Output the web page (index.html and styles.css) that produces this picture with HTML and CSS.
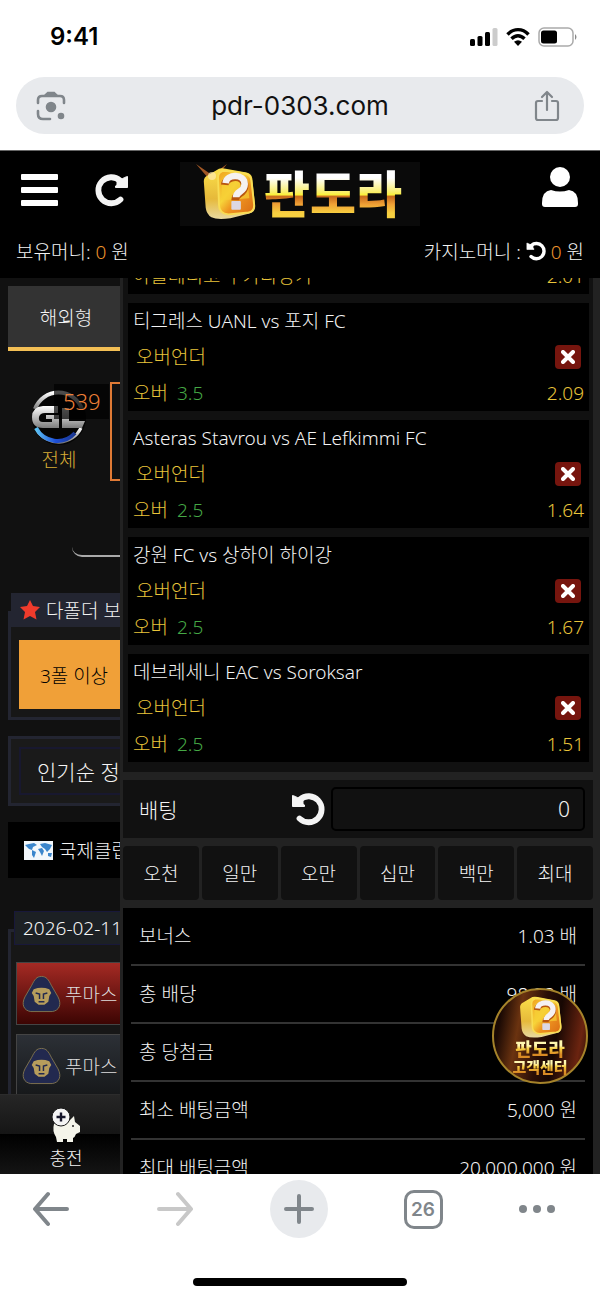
FILE: index.html
```html
<!DOCTYPE html>
<html lang="ko">
<head>
    <meta charset="UTF-8">
    <meta name="viewport" content="width=device-width, initial-scale=1.0">
    <title>판도라</title>
    <link rel="stylesheet" href="styles.css">
</head>
<body>
    <svg class="defs" width="0" height="0" aria-hidden="true">
        <defs>
            <linearGradient id="face" x1="0" y1="0" x2="1" y2="1">
                <stop offset="0" stop-color="#f0a020"/>
                <stop offset="0.4" stop-color="#f7d53a"/>
                <stop offset="0.6" stop-color="#ee9420"/>
                <stop offset="1" stop-color="#d96a14"/>
            </linearGradient>
            <linearGradient id="side" x1="0" y1="0" x2="0" y2="1">
                <stop offset="0" stop-color="#fbe04a"/>
                <stop offset="0.6" stop-color="#e6b93a"/>
                <stop offset="1" stop-color="#e9d9a0"/>
            </linearGradient>
            <linearGradient id="steel" x1="0" y1="0" x2="0" y2="1">
                <stop offset="0" stop-color="#ffffff"/>
                <stop offset="1" stop-color="#7d7d7d"/>
            </linearGradient>
            <linearGradient id="blue" x1="0" y1="0" x2="1" y2="0">
                <stop offset="0" stop-color="#5cc3f5"/>
                <stop offset="0.5" stop-color="#1e50d8"/>
                <stop offset="1" stop-color="#1a3690"/>
            </linearGradient>
            <symbol id="icon-undo" viewBox="0 0 34 34">
                <path d="M8.5 26.5A13 13 0 1 0 9 7.5" fill="none" stroke="currentColor" stroke-width="5.8" stroke-linecap="round"/>
                <path d="M1.5 3.5L4.5 4.5L7 6L12 7V12L13.5 13V14.5H1.5Z" fill="currentColor" stroke="currentColor" stroke-linejoin="round"/>
            </symbol>
            <symbol id="icon-cube" viewBox="0 0 60 60">
                <path d="M4 17Q4 13 8 11L20 4Q23 3 27 4L49 8Q54 9 55 14L58 42Q59 49 52 51L32 56Q18 58 12 55Q7 52 6 45Z" fill="url(#side)"/>
                <path d="M19 13Q19 6 27 6L47 9Q53 10 54 16L57 42Q57 49 51 50L30 52Q20 51 20 42Z" fill="url(#face)" stroke="#f9dd55" stroke-width="2"/>
                <path d="M23 17Q23 12 28 12L46 14Q49 15 50 19L52 35L23 37Z" fill="#f6cf35" opacity="0.7"/>
                <path d="M26 21C27 11 47 9 47 22C47 31 37 29 37 37" fill="none" stroke="#b85510" stroke-width="8"/>
                <path d="M27 19C28 9 47 9 47 20C47 29 38 27 38 34" fill="none" stroke="#f5f1f2" stroke-width="7"/>
                <rect x="33" y="38" width="10" height="9" rx="1" fill="#dcd8e4"/>
            </symbol>
            <symbol id="icon-puma" viewBox="0 0 40 38">
                <path d="M20 1C25 1 27 4 30 10L37 22C41 30 38 36 31 37H9C2 36 -1 30 3 22L10 10C13 4 15 1 20 1Z" fill="#22294f" stroke="#7c714f"/>
                <path d="M12 14Q20 11 28 14L30 18L28 21L27 27L23 30H17L13 27L12 21L10 18Z" fill="#b79d5c"/>
                <path d="M14 18L18 19V24M26 18L22 19V24M17 27H23" fill="none" stroke="#22294f" stroke-width="1.5"/>
            </symbol>
        </defs>
    </svg>

    <div class="status-bar">
        <span class="clock">9:41</span>
        <div class="status-icons">
            <svg width="28" height="20" viewBox="0 0 28 20">
                <rect x="0" y="12" width="5" height="7" rx="1.5"/>
                <rect x="7.500" y="9" width="5" height="10" rx="1.5"/>
                <rect x="15" y="5" width="5" height="14" rx="1.5"/>
                <rect x="22.500" y="1" width="5" height="18" rx="1.5" fill="#ccc"/>
            </svg>
            <svg width="24" height="20" viewBox="0 0 24 20">
                <path d="M1.500 7.500C7.500 1 16.500 1 22.500 7.500M5.500 11.800C9.500 7.800 14.500 7.800 18.500 11.800" fill="none" stroke="#000" stroke-width="3.4"/>
                <path d="M8 14.800Q12 11.500 16 14.800L12 19Z"/>
            </svg>
            <svg width="40" height="20" viewBox="0 0 40 20">
                <rect x="1" y="1" width="34" height="18" rx="5" fill="none" stroke="#aaa" stroke-width="1.5"/>
                <rect x="3" y="3.500" width="16" height="13" rx="2.500"/>
                <path d="M37 7Q40 10 37 13Z" fill="#888"/>
            </svg>
        </div>
    </div>

    <div class="address-bar">
        <button class="plain" aria-label="렌즈">
            <svg width="30" height="30" viewBox="0 0 30 30" fill="none" stroke="#80868b" stroke-width="2.600" stroke-linecap="round">
                <path d="M2 12V9Q2 5 6 5H24Q28 5 28 9V12M2 20V23Q2 28 7 28H14"/>
                <path d="M10 4L12 2H18L20 4Z" fill="#80868b"/>
                <circle cx="15" cy="16" r="4" fill="#80868b"/>
                <circle cx="25" cy="25" r="2" fill="#80868b"/>
            </svg>
        </button>
        <span class="url">pdr-0303.com</span>
        <button class="plain" aria-label="공유">
            <svg width="26" height="32" viewBox="0 0 26 32" fill="none" stroke="#80868b" stroke-width="2.200" stroke-linecap="round" stroke-linejoin="round">
                <path d="M8 11H4Q2 11 2 13V28Q2 30 4 30H22Q24 30 24 28V13Q24 11 22 11H18M13 20V2M8 7L13 2L18 7"/>
            </svg>
        </button>
    </div>

    <div class="webview">
        <header class="header">
            <div class="header-top">
                <div class="header-left">
                    <button class="plain" aria-label="메뉴">
                        <svg width="37" height="32" viewBox="0 0 37 32" fill="#fff">
                            <rect width="37" height="6" rx="1"/>
                            <rect y="13" width="37" height="6" rx="1"/>
                            <rect y="26" width="37" height="6" rx="1"/>
                        </svg>
                    </button>
                    <button class="plain flip" aria-label="새로고침">
                        <svg width="34" height="34"><use href="#icon-undo"/></svg>
                    </button>
                </div>
                <div class="logo">
                    <svg width="64" height="60" viewBox="0 0 64 60">
                        <path d="M0 0L16 11L31 0L20 14L12 30L13 15Z" fill="#c76a2c" opacity="0.8"/>
                        <use href="#icon-cube" x="4" y="1" width="57" height="57"/>
                        <circle cx="16" cy="12" r="4" fill="#ffe9b0" opacity="0.7"/>
                    </svg>
                    <span class="logo-text">판도라</span>
                </div>
                <button class="plain user" aria-label="내 정보">
                    <svg width="36" height="42" viewBox="0 0 36 42" fill="#fff">
                        <circle cx="18" cy="11" r="10"/>
                        <path d="M9 24Q18 27 27 24Q36 25 36 37V38Q36 41 33 41H3Q0 41 0 38V37Q0 25 9 24Z"/>
                    </svg>
                </button>
            </div>
            <div class="money">
                <span>보유머니: <b>0</b> 원</span>
                <span>카지노머니 : <svg width="20" height="20"><use href="#icon-undo"/></svg> <b>0</b> 원</span>
            </div>
        </header>

        <div class="content">
            <div class="page">
                <main class="games">
                    <button class="tab">해외형</button>
                    <div class="categories">
                        <div class="category">
                            <svg width="56" height="56" viewBox="0 0 56 56">
                                <circle cx="28" cy="28" r="27" fill="#050505"/>
                                <path d="M4 19A25 25 0 0 1 51 19" fill="none" stroke="url(#steel)" stroke-width="4"/>
                                <path d="M50 38A25 25 0 0 1 6 40" fill="none" stroke="url(#steel)" stroke-width="3"/>
                                <path d="M5 38A24 24 0 0 0 44 43" fill="none" stroke="url(#blue)" stroke-width="4"/>
                                <path d="M27 16H12Q1 17 1 27Q1 38 12 38H28V25H15V29H21V32H12Q7 32 8 27Q9 23 14 23H27Z" fill="url(#steel)"/>
                                <path d="M31 18H38V31H54L51 38H31Z" fill="url(#steel)"/>
                            </svg>
                            <span class="count">539</span>
                            <span class="category-name">전체</span>
                        </div>
                        <div class="category-box"></div>
                    </div>
                    <div class="filter"></div>

                    <section class="panel">
                        <h2 class="panel-title">
                            <svg width="20" height="20" viewBox="0 0 20 20"><path d="M10 0L13 6L20 7L15 12L16.500 19.500L10 16L3.500 19.500L5 12L0 7L7 6Z" fill="#ef3b2c"/></svg>
                            다폴더 보너스
                        </h2>
                        <div class="panel-body">
                            <button class="bonus">3폴 이상</button>
                        </div>
                    </section>

                    <div class="sort"><button class="sort-button">인기순 정렬</button></div>

                    <h2 class="league">
                        <svg width="29" height="19" viewBox="0 0 29 19">
                            <rect width="29" height="19" fill="#f2f7fb"/>
                            <path d="M1 4L5 3L10 2L13 4L9 6L8 9L5 8L3 6ZM8 9L12 11L10 17L8 14ZM16 3L21 2L28 4L26 8L23 11L21 8L18 6ZM14 8L18 7L20 10L18 15L16 11ZM24 12L28 12L27 16L24 15Z" fill="#3b86cc"/>
                        </svg>
                        국제클럽친선
                    </h2>

                    <section class="panel">
                        <h2 class="date">2026-02-11</h2>
                        <div class="panel-body matches">
                            <button class="team selected"><svg width="39" height="38"><use href="#icon-puma"/></svg>푸마스</button>
                            <button class="team"><svg width="39" height="38"><use href="#icon-puma"/></svg>푸마스</button>
                        </div>
                    </section>
                </main>
                <nav class="bottom-nav">
                    <a class="nav-link" href="#">
                        <svg width="30" height="36" viewBox="0 0 30 36">
                            <path d="M3 17Q8 13 18 14L23 9L24 15L29 19V25L25 27Q24 30 22 31V35H16V32H12V35H6L5 30Q1 24 3 17Z" fill="#f4f4ea"/>
                            <circle cx="22" cy="19" r="1" fill="#222"/>
                            <circle cx="10" cy="10" r="9" fill="#f4f4f4" stroke="#1a1a1a"/>
                            <path d="M10 5.500V14.500M5.500 10H14.500" stroke="#15152a" stroke-width="2.400"/>
                        </svg>
                        충전
                    </a>
                </nav>
            </div>

            <aside class="slip">
                <div class="bets">
                    <article class="bet">
                        <div class="bet-row"><span>아틀레티코 부카라망가</span><span>2.01</span></div>
                    </article>
                    <article class="bet">
                        <h3>티그레스 UANL vs 포지 FC</h3>
                        <div class="bet-row"><span class="type">오버언더</span><button class="remove" aria-label="삭제"><svg width="14" height="14" viewBox="0 0 14 14"><path d="M2 2L12 12M12 2L2 12"/></svg></button></div>
                        <div class="bet-row"><span>오버 <i>3.5</i></span><span>2.09</span></div>
                    </article>
                    <article class="bet">
                        <h3>Asteras Stavrou vs AE Lefkimmi FC</h3>
                        <div class="bet-row"><span class="type">오버언더</span><button class="remove" aria-label="삭제"><svg width="14" height="14" viewBox="0 0 14 14"><path d="M2 2L12 12M12 2L2 12"/></svg></button></div>
                        <div class="bet-row"><span>오버 <i>2.5</i></span><span>1.64</span></div>
                    </article>
                    <article class="bet">
                        <h3>강원 FC vs 상하이 하이강</h3>
                        <div class="bet-row"><span class="type">오버언더</span><button class="remove" aria-label="삭제"><svg width="14" height="14" viewBox="0 0 14 14"><path d="M2 2L12 12M12 2L2 12"/></svg></button></div>
                        <div class="bet-row"><span>오버 <i>2.5</i></span><span>1.67</span></div>
                    </article>
                    <article class="bet">
                        <h3>데브레세니 EAC vs Soroksar</h3>
                        <div class="bet-row"><span class="type">오버언더</span><button class="remove" aria-label="삭제"><svg width="14" height="14" viewBox="0 0 14 14"><path d="M2 2L12 12M12 2L2 12"/></svg></button></div>
                        <div class="bet-row"><span>오버 <i>2.5</i></span><span>1.51</span></div>
                    </article>
                </div>

                <div class="stake">
                    <label for="stake">배팅</label>
                    <button class="plain" aria-label="초기화"><svg width="34" height="34"><use href="#icon-undo"/></svg></button>
                    <input type="text" id="stake" value="0">
                </div>

                <div class="amounts">
                    <button>오천</button>
                    <button>일만</button>
                    <button>오만</button>
                    <button>십만</button>
                    <button>백만</button>
                    <button>최대</button>
                </div>

                <dl class="summary">
                    <div><dt>보너스</dt><dd>1.03 배</dd></div>
                    <div><dt>총 배당</dt><dd>98.28 배</dd></div>
                    <div><dt>총 당첨금</dt><dd></dd></div>
                    <div><dt>최소 배팅금액</dt><dd>5,000 원</dd></div>
                    <div><dt>최대 배팅금액</dt><dd>20,000,000 원</dd></div>
                </dl>
            </aside>
        </div>

        <a class="support" href="#">
            <svg width="46" height="46"><use href="#icon-cube"/></svg>
            <span class="support-name">판도라</span>
            <span class="support-text">고객센터</span>
        </a>
    </div>

    <div class="toolbar">
        <div class="toolbar-buttons">
            <button class="tool" aria-label="뒤로">
                <svg width="36" height="36" viewBox="0 0 36 36" stroke="#80868b"><path d="M34 18H3M15 3L2 18L15 33"/></svg>
            </button>
            <button class="tool" aria-label="앞으로">
                <svg width="36" height="36" viewBox="0 0 36 36" stroke="#c8c8c8"><path d="M2 18H33M21 3L34 18L21 33"/></svg>
            </button>
            <button class="tool" aria-label="새 탭">
                <svg width="58" height="58" viewBox="0 0 58 58" stroke="#80868b"><circle cx="29" cy="29" r="29" fill="#e8eaed" stroke="none"/><path d="M29 16V42M16 29H42"/></svg>
            </button>
            <button class="tool" aria-label="탭 목록"><span class="tab-count">26</span></button>
            <button class="tool more" aria-label="더보기">
                <svg width="36" height="8" viewBox="0 0 36 8" fill="#80868b"><circle cx="4" cy="4" r="4"/><circle cx="18" cy="4" r="4"/><circle cx="32" cy="4" r="4"/></svg>
            </button>
        </div>
        <div class="home-indicator"></div>
    </div>
</body>
</html>
```
FILE: styles.css
```css
* {
    box-sizing: border-box;
}

body {
    display: flex;
    flex-direction: column;
    height: 100vh;
    margin: 0;
    background: #fff;
    color: #f4f4f4;
    font-family: "Noto Sans", "Noto Sans CJK KR", sans-serif;
    font-size: 19px;
    font-weight: 300;
}

button, input {
    font: inherit;
    color: inherit;
}

button {
    padding: 0;
    border: none;
    cursor: pointer;
}

svg {
    flex: none;
    display: block;
}

h2, h3, dl, dd {
    margin: 0;
    font-size: 19px;
    font-weight: 300;
}

a {
    color: inherit;
    text-decoration: none;
}

.defs {
    position: absolute;
}

.plain {
    background: none;
}

/* browser top */
.status-bar {
    display: flex;
    flex: none;
    justify-content: space-between;
    align-items: center;
    height: 77px;
    padding: 0 22px 4px 50px;
    color: #000;
}

.clock {
    font-family: Inter, sans-serif;
    font-size: 24px;
    font-weight: 600;
}

.status-icons {
    display: flex;
    gap: 8px;
}

.address-bar {
    display: flex;
    flex: none;
    justify-content: space-between;
    align-items: center;
    height: 57px;
    margin: 0 16px 16px;
    padding: 0 24px 0 20px;
    border-radius: 29px;
    background: #e8eaed;
}

.url {
    color: #111;
    font-family: Inter, sans-serif;
    font-size: 26px;
    font-weight: 400;
}

/* site */
.webview {
    position: relative;
    display: flex;
    flex: 1;
    flex-direction: column;
    min-height: 0;
    overflow: hidden;
    border-top: 1px solid #666;
    background: #000;
}

.header {
    flex: none;
    padding: 11px 16px 0;
}

.header-top {
    display: grid;
    grid-template-columns: 1fr auto 1fr;
    align-items: center;
}

.header-left {
    display: flex;
    align-items: center;
    gap: 37px;
    padding: 0 0 8px 5px;
}

.flip {
    transform: scaleX(-1);
}

.logo {
    display: flex;
    align-items: center;
    gap: 4px;
    width: 240px;
    height: 64px;
    padding-left: 16px;
    background: #0a0a0a;
}

.logo-text {
    background: linear-gradient(#fff 25%, #f9ee6a 47%, #fbf23c 51%, #c86a1c 54%, #f0a035 66%, #f7d040 80%);
    background-clip: text;
    -webkit-background-clip: text;
    color: transparent;
    font-size: 50px;
    font-weight: 900;
    line-height: 64px;
}

.user {
    justify-self: end;
    margin: 0 6px 14px 0;
}

.money {
    display: flex;
    justify-content: space-between;
    height: 52px;
    line-height: 52px;
}

.money svg {
    display: inline-block;
    vertical-align: -2px;
    color: #fff;
}

.money b {
    color: #ee942c;
    font-weight: 300;
}

.content {
    display: flex;
    flex: 1;
    min-height: 0;
}

/* game list under the slip */
.page {
    display: flex;
    flex-direction: column;
    width: 20%;
    overflow: hidden;
    background: #111;
    white-space: nowrap;
}

.games {
    flex: 1;
    min-height: 0;
    overflow: hidden;
    padding: 8px 0 0 8px;
}

.tab {
    width: 116px;
    height: 65px;
    border-bottom: 4px solid #f3bf55;
    background: #333;
}

.categories {
    display: flex;
    padding-top: 31px;
}

.category {
    position: relative;
    display: flex;
    flex: none;
    flex-direction: column;
    align-items: center;
    width: 102px;
    height: 99px;
    padding-top: 8px;
    color: #d6ac35;
}

.count {
    position: absolute;
    top: 2px;
    right: 1px;
    width: 55px;
    height: 35px;
    padding-left: 9px;
    background: rgba(0, 0, 0, 0.7);
    color: #ee8038;
    font-size: 22px;
    line-height: 35px;
}

.category-name {
    line-height: 28px;
}

.category-box {
    flex: none;
    width: 102px;
    border: 2px solid #e07a35;
}

.filter {
    width: 200px;
    height: 60px;
    margin: 16px 0 36px 64px;
    border-bottom: 2px solid #aaa;
    border-radius: 10px;
}

.panel {
    width: 300px;
}

.panel-title, .date {
    position: relative;
    height: 34px;
}

.panel-title {
    display: flex;
    align-items: center;
    gap: 6px;
    margin-left: 3px;
    padding-left: 9px;
    background: #232531;
}

.panel-body {
    margin-top: -16px;
    padding: 26px 8px 8px;
    border: 3px solid #232531;
    background: #171717;
}

.bonus {
    width: 110px;
    height: 69px;
    background: #f0a038;
    color: #000;
}

.sort {
    width: 300px;
    height: 70px;
    margin-top: 16px;
    padding: 8px;
    border: 3px solid #232531;
    background: #1a1a1a;
}

.sort-button {
    width: 100%;
    height: 48px;
    padding-left: 16px;
    border: 2px solid #18182f;
    background: none;
    font-size: 21px;
    text-align: left;
}

.league {
    display: flex;
    align-items: center;
    gap: 6px;
    height: 56px;
    margin: 16px 0 33px;
    padding-left: 16px;
    background: #000;
}

.date {
    width: 130px;
    margin-left: 6px;
    padding-left: 8px;
    border: 1px solid #18183a;
    background: #1c2024;
    line-height: 32px;
}

.matches {
    padding: 30px 5px;
}

.team {
    display: flex;
    align-items: center;
    gap: 4px;
    width: 100%;
    height: 63px;
    margin-bottom: 9px;
    padding-left: 5px;
    border: 1px solid #444;
    background: linear-gradient(#2c3036, #16181a);
    color: #ddd;
}

.team.selected {
    background: linear-gradient(#a52a24, #3c0503);
}

.bottom-nav {
    flex: none;
    height: 80px;
    border-top: 1px solid #2c2c2c;
    background: linear-gradient(#262626, #151515 50%, #000 50%, #141414);
}

.nav-link {
    display: flex;
    flex-direction: column;
    align-items: center;
    width: 132px;
    padding-top: 12px;
    font-size: 18px;
    line-height: 30px;
}

/* bet slip */
.slip {
    display: flex;
    flex: 1;
    flex-direction: column;
    gap: 8px;
    min-width: 0;
    padding: 0 7px 0 3px;
    background: #222;
}

.bets {
    display: flex;
    flex: none;
    flex-direction: column;
    justify-content: flex-end;
    gap: 9px;
    height: 494px;
    overflow: hidden;
    padding: 0 4px 10px 5px;
    background: #111;
}

.bet {
    flex: none;
    padding: 0 5px;
    background: #000;
    line-height: 36px;
}

.bet-row {
    display: flex;
    justify-content: space-between;
    align-items: center;
    height: 36px;
    color: #e9c43a;
}

.bet-row i {
    margin-left: 4px;
    color: #45a845;
    font-style: normal;
}

.type {
    padding-left: 3px;
}

.remove {
    display: flex;
    justify-content: center;
    align-items: center;
    width: 26px;
    height: 24px;
    margin-right: 3px;
    border-radius: 4px;
    background: #76150e;
}

.remove path {
    fill: none;
    stroke: #fff;
    stroke-width: 4;
    stroke-linecap: round;
}

.stake {
    display: flex;
    flex: none;
    align-items: center;
    gap: 6px;
    height: 58px;
    padding: 0 8px 0 16px;
    background: #111;
    font-size: 21px;
}

.stake label {
    flex: 1;
}

.stake input {
    width: 57%;
    height: 44px;
    padding: 0 13px;
    border: 2px solid #000;
    border-radius: 5px;
    background: #111;
    text-align: right;
}

.amounts {
    display: grid;
    flex: none;
    grid-template-columns: repeat(6, 1fr);
    gap: 3px;
}

.amounts button {
    height: 54px;
    border-radius: 4px;
    background: #111;
}

.summary {
    flex: 1;
    min-height: 0;
    overflow: hidden;
    padding: 0 8px;
    background: #000;
}

.summary div {
    display: flex;
    justify-content: space-between;
    padding: 0 8px;
    border-bottom: 2px solid #333;
    line-height: 56px;
}

.support {
    position: absolute;
    right: 12px;
    bottom: 90px;
    display: flex;
    flex-direction: column;
    align-items: center;
    width: 96px;
    height: 96px;
    padding-top: 4px;
    border: 2px solid #a5832a;
    border-radius: 50%;
    background: linear-gradient(100deg, #1a0904 10%, #6b3310 28%, #2a0e06 50%, #170703 65%, #6b2410 88%, #2a0e06);
    font-weight: 900;
}

.support-name, .support-text {
    background: linear-gradient(#fff8b0 30%, #f5c93c 50%, #d98a24 80%);
    background-clip: text;
    -webkit-background-clip: text;
    color: transparent;
    font-size: 18px;
    line-height: 18px;
}

.support-text {
    font-size: 15px;
}

/* browser bottom */
.toolbar {
    display: flex;
    flex: none;
    flex-direction: column;
    justify-content: space-between;
    align-items: center;
    height: 125px;
    padding: 6px 0 13px;
    background: #fff;
}

.toolbar-buttons {
    display: flex;
    justify-content: space-between;
    width: 100%;
    padding: 0 41px 0 19px;
}

.tool {
    display: flex;
    justify-content: center;
    align-items: center;
    width: 64px;
    height: 58px;
    background: none;
}

.tool path {
    fill: none;
    stroke-width: 4;
    stroke-linecap: round;
    stroke-linejoin: round;
}

.more {
    width: 44px;
}

.tab-count {
    width: 39px;
    height: 39px;
    border: 3px solid #80868b;
    border-radius: 10px;
    color: #80868b;
    font-family: Inter, sans-serif;
    font-size: 19px;
    font-weight: 600;
    line-height: 34px;
}

.home-indicator {
    width: 214px;
    height: 8px;
    border-radius: 4px;
    background: #000;
}
```
